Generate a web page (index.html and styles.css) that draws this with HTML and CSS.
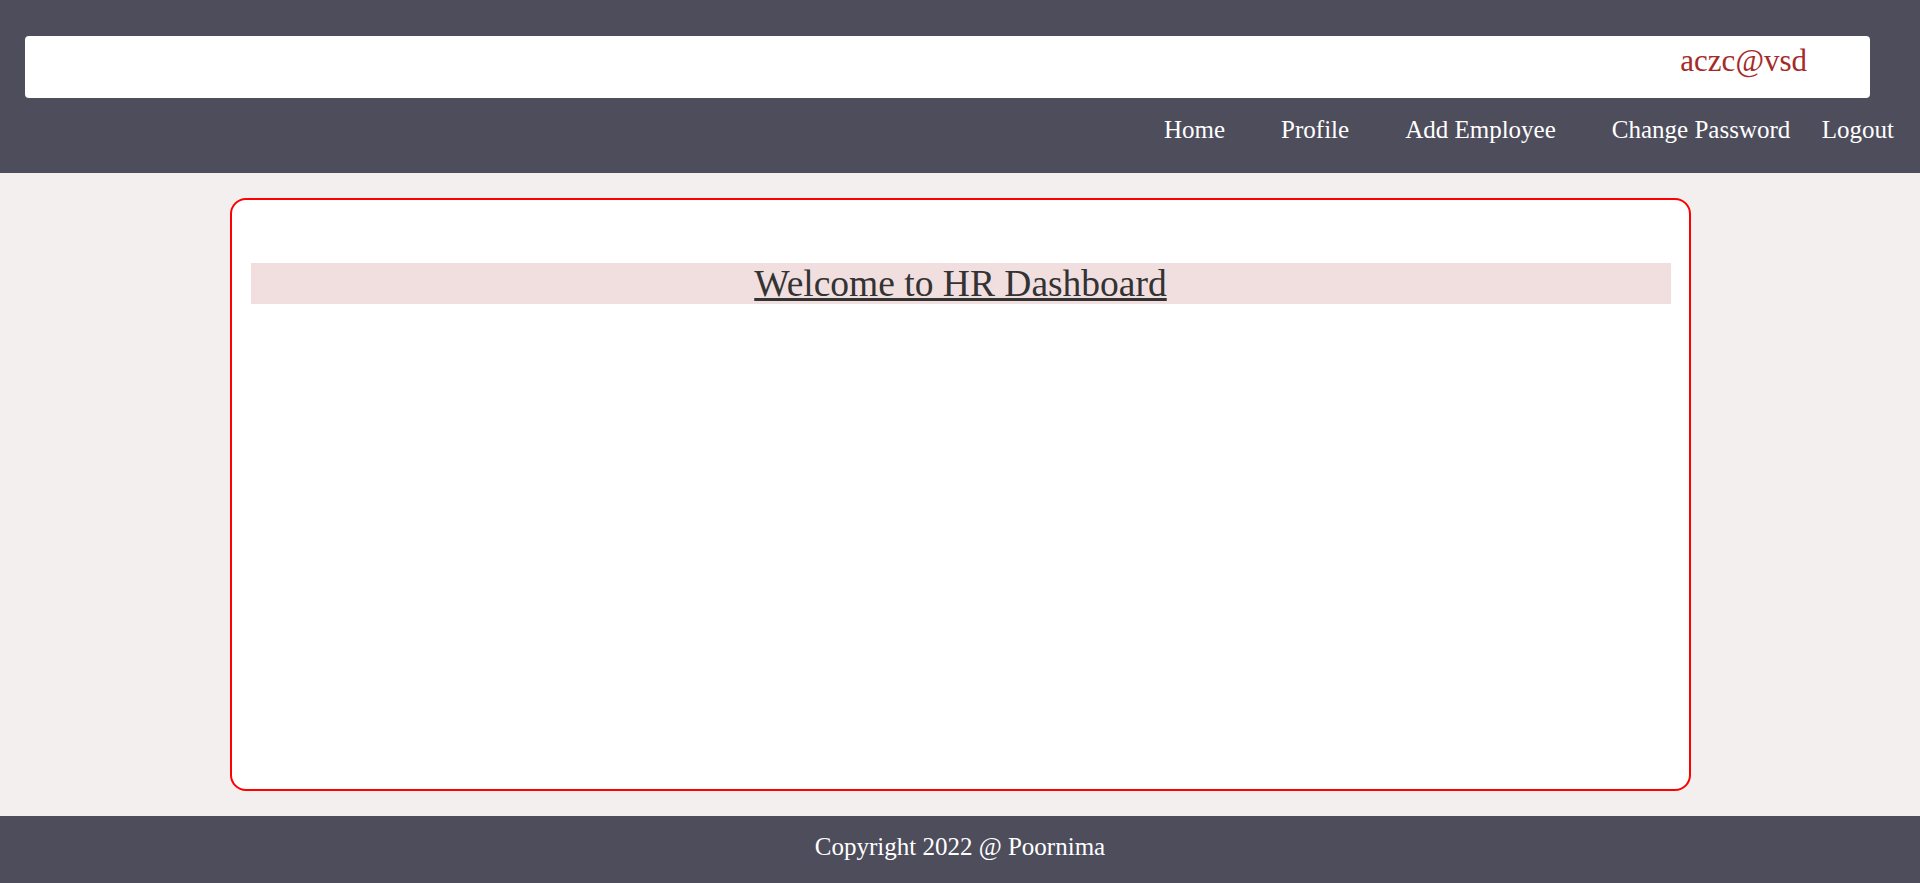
FILE: index.html
```html
<!DOCTYPE html>
<html lang="en">
<head>
<meta charset="utf-8">
<title>HR Dashboard</title>
<link rel="stylesheet" href="styles.css">
</head>
<body>
<header class="topbar">
  <div class="userbar"><span class="user-email">aczc@vsd</span></div>
  <nav class="mainnav">
    <a class="nav-link nav-home" href="#">Home</a>
    <a class="nav-link nav-gap" href="#">Profile</a>
    <a class="nav-link nav-gap" href="#">Add Employee</a>
    <a class="nav-link nav-gap" href="#">Change Password</a>
    <a class="nav-link nav-gap-small" href="#">Logout</a>
  </nav>
</header>
<main class="content">
  <section class="card">
    <h1 class="card-title"><span class="title-text">Welcome to HR Dashboard</span></h1>
  </section>
</main>
<footer class="footer">Copyright 2022 @ Poornima</footer>
</body>
</html>
```
FILE: styles.css
```css
* { box-sizing: border-box; }
html, body { margin: 0; padding: 0; }
body {
  font-family: "Liberation Serif", "Times New Roman", serif;
  background: #f3efee;
  height: 883px;
  display: flex;
  flex-direction: column;
}
.topbar {
  background: #4e4d5c;
  padding: 36px 26px 0 25px;
  height: 173px;
  flex: none;
}
.userbar {
  background: #ffffff;
  height: 62px;
  margin-right: 24px;
  border-radius: 4px;
  display: flex;
  justify-content: flex-end;
  padding: 9px 63px 0 0;
}
.user-email {
  color: #a52a2a;
  font-size: 31px;
  line-height: 31px;
}
.mainnav {
  display: flex;
  justify-content: flex-end;
  padding-top: 16px;
}
.nav-link {
  color: #ffffff;
  text-decoration: none;
  font-size: 25px;
  line-height: 31px;
}
.nav-gap { margin-left: 56px; }
.nav-gap-small { margin-left: 31.5px; }
.content {
  flex: 1;
  padding: 25px 0;
  display: flex;
  justify-content: center;
}
.card {
  width: 1461px;
  height: 593px;
  background: #ffffff;
  border: 2px solid #ff0000;
  border-radius: 16px;
  padding: 63px 18px 0 19px;
}
.card-title {
  margin: 0;
  background: #f1dfe0;
  height: 41px;
  font-size: 37.5px;
  line-height: 41px;
  font-weight: normal;
  text-align: center;
  color: #333333;
}
.title-text { text-decoration: underline; }
.footer {
  flex: none;
  height: 67px;
  background: #4e4d5c;
  color: #ffffff;
  text-align: center;
  font-size: 25px;
  line-height: 61px;
}
```
